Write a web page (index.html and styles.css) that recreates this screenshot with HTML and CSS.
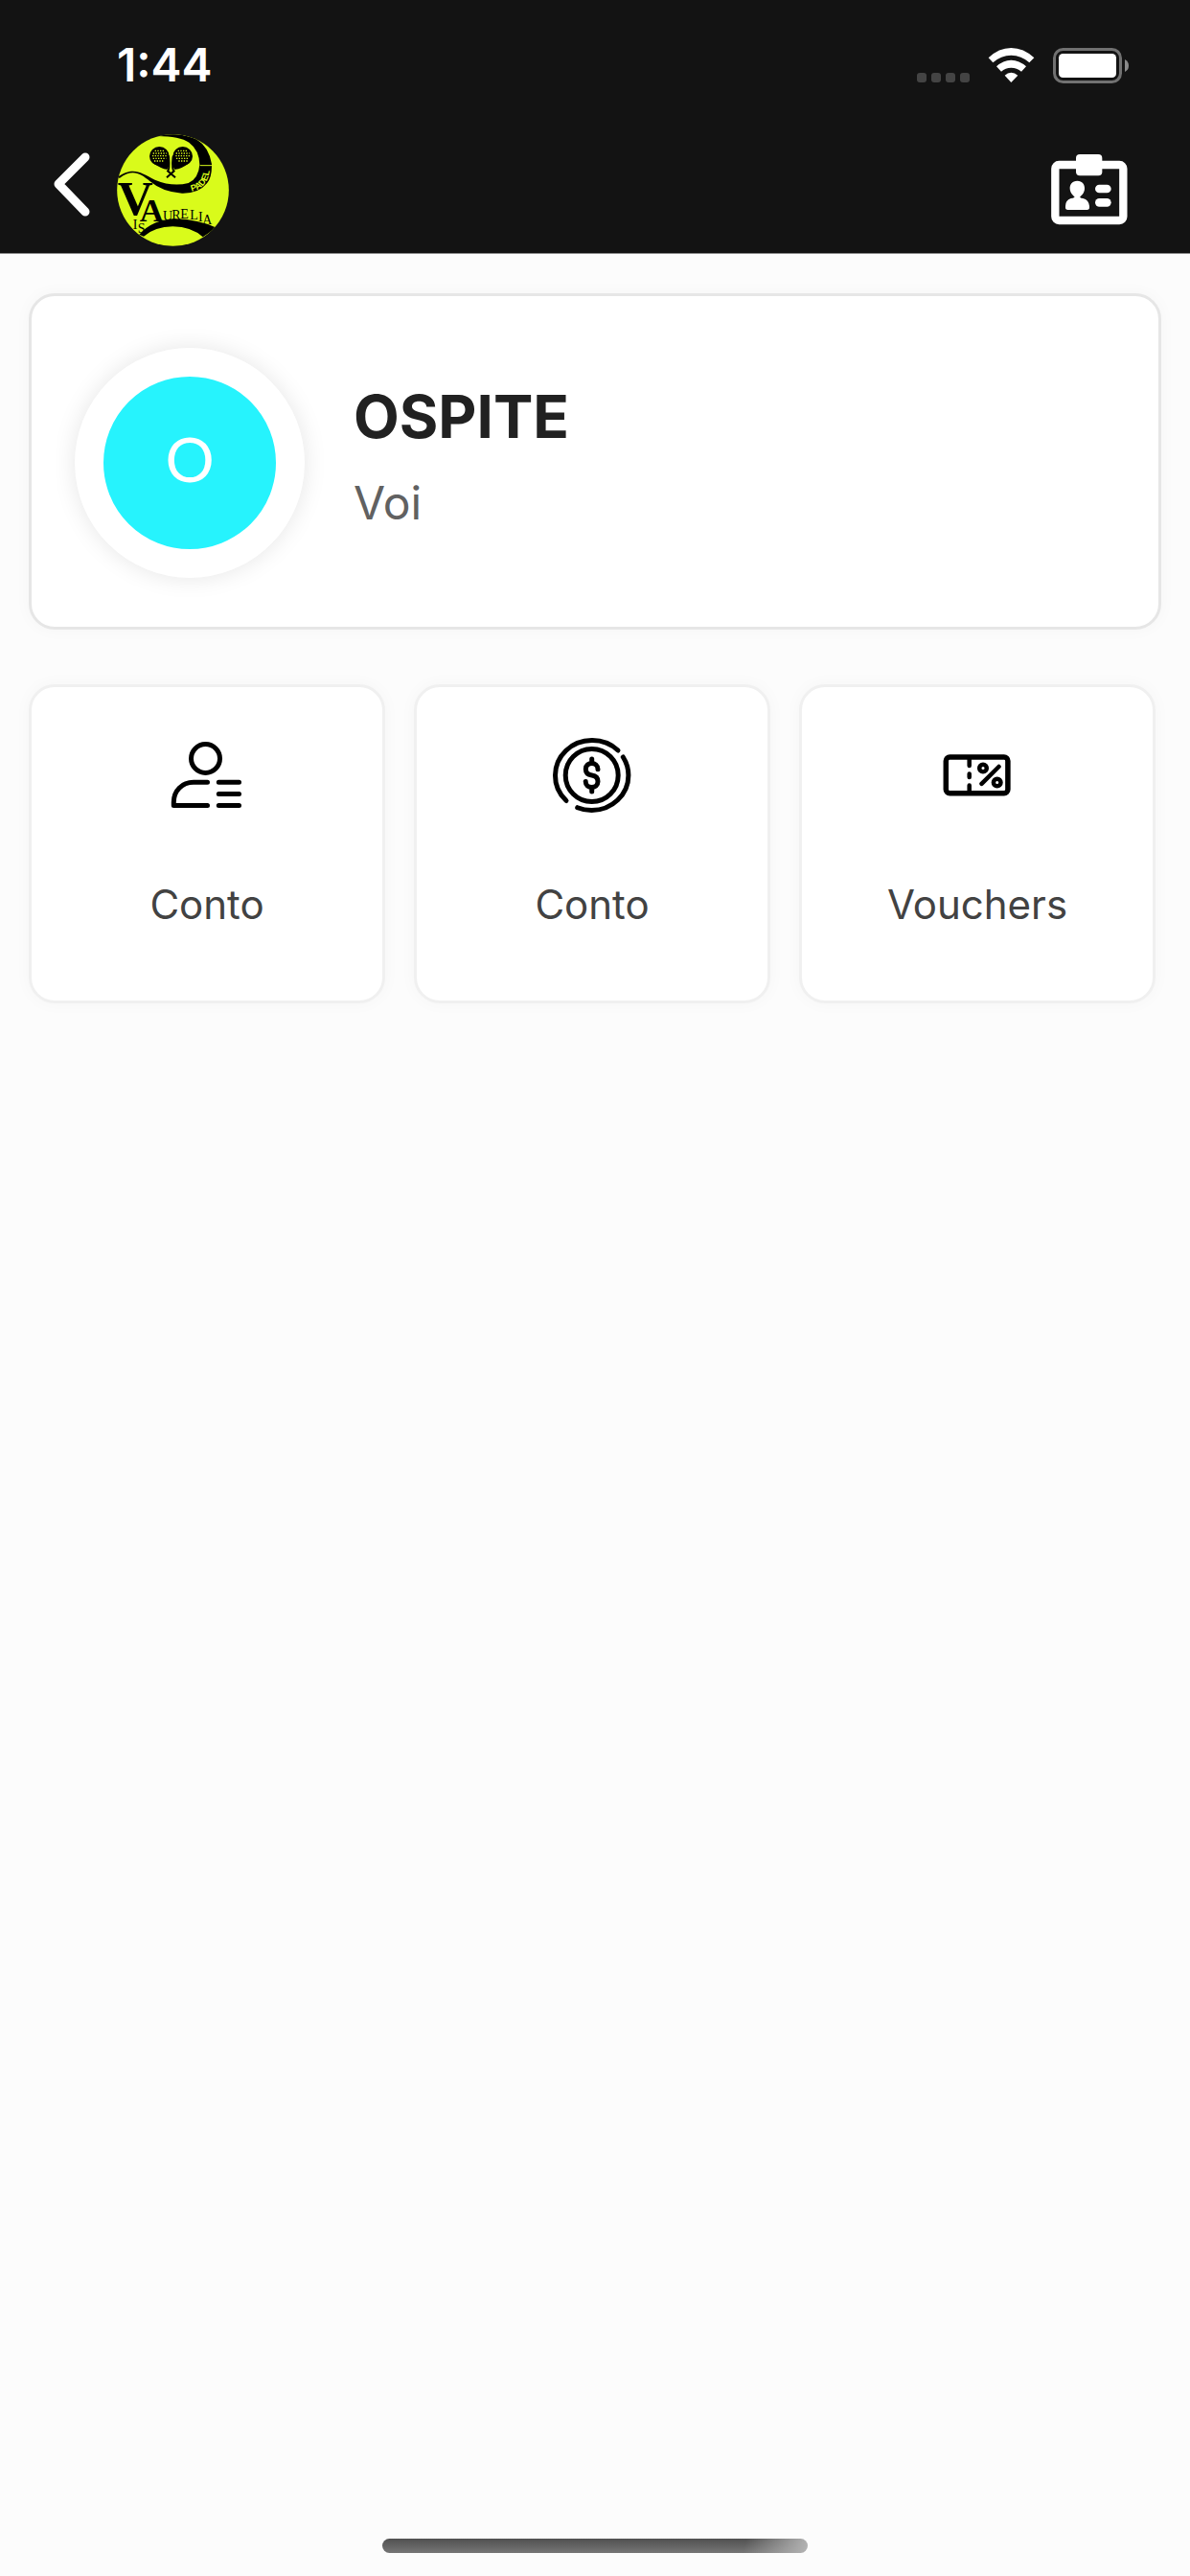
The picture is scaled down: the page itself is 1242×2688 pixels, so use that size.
FILE: index.html
```
<!DOCTYPE html>
<html lang="it">
<head>
<meta charset="utf-8">
<meta name="viewport" content="width=device-width, initial-scale=1">
<title>Vis Aurelia Padel</title>
<link rel="stylesheet" href="styles.css">
</head>
<body>
<div class="screen">
  <header class="topbar">
    <div class="status">
      <span class="time">1:44</span>
      <svg class="status-icons" viewBox="111 84 666 114" aria-hidden="true">
        <g fill="#444">
          <rect x="111" y="165" width="30" height="30" rx="9"/>
          <rect x="156" y="165" width="30" height="30" rx="9"/>
          <rect x="201" y="165" width="30" height="30" rx="9"/>
          <rect x="246" y="165" width="30" height="30" rx="9"/>
        </g>
        <g fill="#fff">
          <path d="M335 118Q367 87 406 87T478 118L463 133Q438 110 406 110T349 133Z"/>
          <path d="M360 145Q381 125 406 125T453 145L438 161Q424 149 406 149T375 161Z"/>
          <path d="M386 173Q395 164 406 164T427 173L406 195Z"/>
          <rect x="555" y="105" width="180" height="75" rx="13"/>
        </g>
        <rect x="541.500" y="91.500" width="207" height="102" rx="27" fill="none" stroke="#717171" stroke-width="9"/>
        <path d="M762 123Q774 129 774 142.500T762 162Z" fill="#8a8a8a"/>
      </svg>
    </div>
    <nav class="nav">
      <button class="icon-button back" type="button" aria-label="Indietro">
        <svg class="chevron" viewBox="0 0 40 80"><path d="M34 6L6 34L34 63" fill="none" stroke="#fff" stroke-width="9" stroke-linecap="round" stroke-linejoin="round"/></svg>
      </button>
      <a class="logo" href="#" aria-label="Vis Aurelia Padel">
        <svg viewBox="36 30 351 351">
          <defs>
            <clipPath id="ball"><circle cx="211.500" cy="205.500" r="175"/></clipPath>
            <path id="padel-line" d="M270 209Q328 198 328 122"/>
          </defs>
          <g clip-path="url(#ball)">
            <rect x="36" y="30" width="351" height="351" fill="#d9fb1b"/>
            <path d="M150 36Q230 34 262 56Q294 80 295 125Q292 168 260 183Q210 196 155 173C110 150 88 131 40 163L44 168C85 138 108 152 140 178Q180 212 240 215Q292 216 318 184Q334 164 333 124Q324 70 285 46Q240 24 150 30Z"/>
            <path d="M296 128H334" stroke="#d9fb1b" stroke-width="3"/>
            <text class="logo-padel" font-size="28"><textPath href="#padel-line">PADEL</textPath></text>
            <g>
              <ellipse cx="169" cy="99" rx="31" ry="30"/>
              <ellipse cx="242" cy="99" rx="31" ry="30"/>
              <path d="M150 121Q180 142 194 140L201 124L200 96L180 110ZM261 121Q235 142 216 140L209 124L210 96L230 110Z"/>
              <path d="M198 100Q202 143 194 148M212 100Q207 143 216 148M193 143L219 166M217 143L192 166" fill="none" stroke="#000" stroke-width="6"/>
              <g fill="none" stroke="#d9fb1b" stroke-width="4" stroke-dasharray="4 4">
                <path d="M155 82H185M149 90H191M147 98H192M149 106H190M153 114H183"/>
                <path d="M227 82H257M221 90H263M220 98H264M222 106H262M229 114H257"/>
              </g>
            </g>
            <path d="M106 344Q150 296 220 295Q290 297 348 323L305 352Q270 320 211 319Q155 320 120 350Z"/>
            <g class="logo-serif">
              <text x="38" y="282" font-size="154" font-weight="bold">V</text>
              <text x="107" y="304" font-size="104" font-weight="bold">A</text>
              <text x="86" y="328" font-size="42">I</text>
              <text x="101" y="338" font-size="42">S</text>
              <text x="180 208 235 265 291 304" y="300 296 293 297 303 311" font-size="42">URELIA</text>
            </g>
          </g>
        </svg>
      </a>
      <button class="icon-button badge" type="button" aria-label="Tessera">
        <svg class="id-card" viewBox="532 424 240 222">
          <rect x="545" y="457" width="213" height="174" rx="12" fill="none" stroke="#fff" stroke-width="25"/>
          <g fill="#fff">
            <rect x="610" y="424" width="82" height="67" rx="12"/>
            <path d="M614 507C598 507 590 519 591 532C592 545 599 550 606 558Q600 562 594 562Q577 568 577 586V593Q578 598 584 598H645Q651 598 652 593V586Q650 567 632 562Q626 562 622 558C630 550 636 545 637 532C638 519 630 507 614 507Z"/>
            <rect x="670" y="519" width="50" height="26" rx="13"/>
            <rect x="670" y="562" width="50" height="26" rx="13"/>
          </g>
        </svg>
      </button>
    </nav>
  </header>

  <main class="content">
    <section class="profile">
      <div class="avatar"><span class="initial">O</span></div>
      <div class="who">
        <h1 class="name">OSPITE</h1>
        <p class="role">Voi</p>
      </div>
    </section>

    <div class="tiles">
      <button class="tile" type="button">
        <svg class="tile-icon" viewBox="0 0 96 96" stroke-width="5">
          <circle cx="46.500" cy="31.500" r="15"/>
          <path d="M48.500 56.300H34C22 56.300 13.300 65 13.300 77V80.600H48.500M60.300 56.300H81.500M60.300 68.500H81.500M60.300 80.600H81.500"/>
        </svg>
        <span class="label">Conto</span>
      </button>
      <button class="tile" type="button">
        <svg class="tile-icon" viewBox="0 0 96 96" stroke-width="5">
          <circle cx="47.700" cy="49" r="27.500"/>
          <path d="M75 23A38.200 36.500 0 0 0 47.700 12.500A38.200 36.500 0 0 0 9.500 49A38.200 36.500 0 0 0 21 75.500M80.300 30A38.200 36.500 0 0 1 85.900 49A38.200 36.500 0 0 1 47.700 85.500A38.200 36.500 0 0 1 32.700 82.700"/>
          <path d="M47.700 32V36.500M47.700 61.500V66M54 42.700C54 34.500 41.300 34.500 41.300 42.500C41.300 46.500 44 48.500 47.700 49S54 51.500 54 55.500C54 63.500 41.200 63.500 41.200 55.500"/>
        </svg>
        <span class="label">Conto</span>
      </button>
      <button class="tile" type="button">
        <svg class="tile-icon" viewBox="0 0 96 96" stroke-width="5">
          <rect x="15.300" y="30" width="64.600" height="37.800" rx="4" stroke-width="5.500"/>
          <path d="M39.700 31V39M39.700 47.500V51M39.700 59.500V67M52.500 57.800L70.500 40" stroke-width="4.500"/>
          <circle cx="54" cy="41.500" r="3.800" stroke-width="4.500"/>
          <circle cx="68.700" cy="56.500" r="3.800" stroke-width="4.500"/>
        </svg>
        <span class="label">Vouchers</span>
      </button>
    </div>
  </main>

  <footer class="home"><div class="home-bar"></div></footer>
</div>
</body>
</html>
```
FILE: styles.css
```
* {
  box-sizing: border-box;
}

body {
  margin: 0;
  background: #fcfcfc;
  font-family: Inter, "Liberation Sans", sans-serif;
}

button {
  font: inherit;
  color: inherit;
  cursor: pointer;
}

svg {
  display: block;
}

.screen {
  display: flex;
  flex-direction: column;
  min-height: 100vh;
}

.topbar {
  background: #131313;
  border-bottom: 1px solid #8c8c8c;
}

.status {
  display: flex;
  align-items: center;
  justify-content: space-between;
  height: 132px;
  padding: 4px 63px 0 122px;
}

.time {
  color: #fff;
  font-size: 48px;
  font-weight: 600;
  line-height: 60px;
}

.status-icons {
  width: 222px;
  height: 38px;
}

.nav {
  display: flex;
  align-items: center;
  height: 132px;
  padding: 0 65px 0 55px;
}

.icon-button {
  padding: 0;
  border: 0;
  background: none;
}

.chevron {
  width: 40px;
  height: 80px;
}

.logo {
  width: 117px;
  margin-left: 27px;
}

.logo-serif {
  font-family: "Liberation Serif", serif;
}

.logo-padel {
  fill: #d9fb1b;
  font-family: "Liberation Sans Narrow", "Liberation Sans", sans-serif;
  font-weight: 700;
}

.badge {
  margin-left: auto;
}

.id-card {
  width: 80px;
  height: 74px;
}

.content {
  flex: 1;
  padding: 41px 30px 0;
}

.profile {
  display: flex;
  align-items: center;
  gap: 51px;
  padding: 54px 45px 51px;
  border: 3px solid #e6e6e6;
  border-radius: 27px;
  background: #fff;
  box-shadow: 0 0 18px rgba(0, 0, 0, 0.03);
}

.avatar {
  display: flex;
  align-items: center;
  justify-content: center;
  width: 240px;
  height: 240px;
  border: 30px solid #fff;
  border-radius: 50%;
  background: #26f3fd;
  box-shadow: 0 0 24px rgba(0, 0, 0, 0.1);
}

.initial {
  padding-bottom: 8px;
  color: #fff;
  font-family: Lato, sans-serif;
  font-size: 64px;
  line-height: 72px;
}

.who {
  display: flex;
  flex-direction: column;
  gap: 24px;
  padding-bottom: 12px;
}

.name {
  margin: 0;
  color: #212121;
  font-size: 62px;
  font-weight: 700;
  line-height: 72px;
}

.role {
  margin: 0;
  color: #616161;
  font-size: 48px;
  font-weight: 400;
  line-height: 60px;
}

.tiles {
  display: grid;
  grid-template-columns: repeat(3, 1fr);
  gap: 30px;
  margin: 57px 6px 0 0;
}

.tile {
  display: flex;
  flex-direction: column;
  align-items: center;
  gap: 63px;
  padding: 43px 12px 75px;
  border: 3px solid #f0f0f0;
  border-radius: 27px;
  background: #fff;
  box-shadow: 0 0 18px rgba(0, 0, 0, 0.03);
}

.tile-icon {
  width: 96px;
  height: 96px;
  fill: none;
  stroke: #000;
  stroke-linecap: round;
  stroke-linejoin: round;
}

.label {
  color: #424242;
  font-size: 42px;
  font-weight: 400;
  line-height: 50px;
}

.home {
  display: flex;
  justify-content: center;
  padding: 24px;
}

.home-bar {
  width: 444px;
  height: 15px;
  border-radius: 8px;
  background:
    linear-gradient(100deg, transparent 85%, #b4b4b4 100%),
    linear-gradient(#505050, #767676);
}
```
